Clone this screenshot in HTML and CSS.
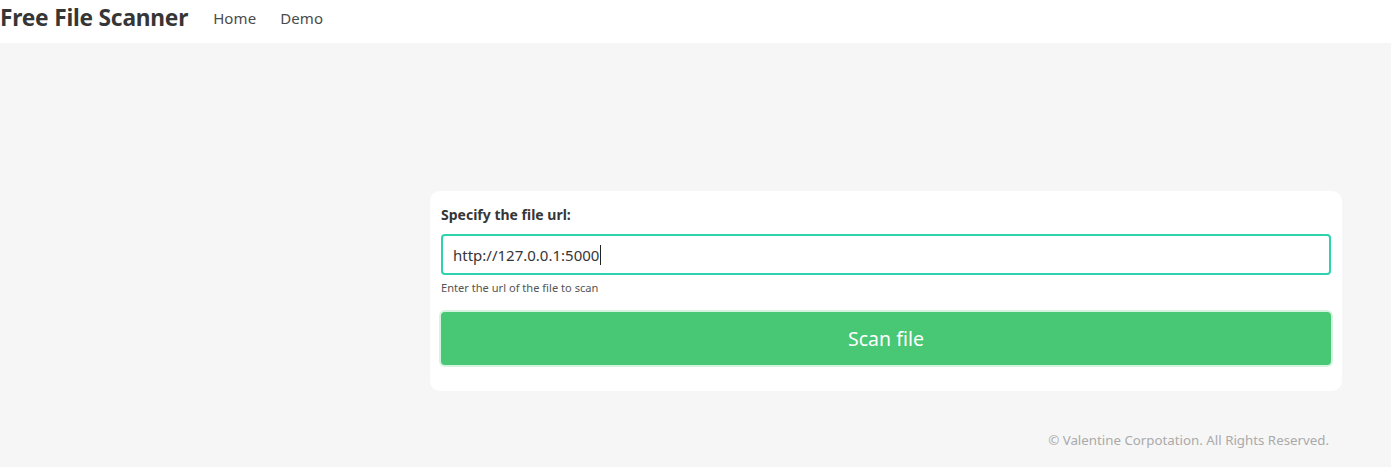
FILE: index.html
```html
<!DOCTYPE html>
<html>
<head>
<meta charset="utf-8">
<link rel="stylesheet" href="styles.css">
</head>
<body>
<nav class="navbar">
  <a class="brand" href="#">Free File Scanner</a>
  <a class="nav-link" href="#">Home</a>
  <a class="nav-link" href="#">Demo</a>
</nav>
<main class="main">
  <form class="card">
    <label class="label">Specify the file url:</label>
    <div class="input">http://127.0.0.1:5000<span class="caret"></span></div>
    <p class="help">Enter the url of the file to scan</p>
    <button class="button" type="button">Scan file</button>
  </form>
</main>
<footer class="footer">© Valentine Corpotation. All Rights Reserved.</footer>
</body>
</html>
```
FILE: styles.css
```css
* { box-sizing: border-box; }
html, body { margin: 0; padding: 0; }
body {
  background: #f6f6f6;
  font-family: "Noto Sans", "Open Sans", sans-serif;
  color: #4a4a4a;
  height: 467px;
  overflow: hidden;
}
.navbar {
  height: 43px;
  padding-bottom: 8px;
  background: #fff;
  display: flex;
  align-items: center;
}
.brand {
  font-size: 22.7px;
  font-weight: 700;
  color: #363636;
  text-decoration: none;
  margin-right: 25px;
  letter-spacing: -0.2px;
}
.nav-link {
  font-size: 15px;
  color: #4a4a4a;
  text-decoration: none;
  margin-right: 24px;
  letter-spacing: 0.1px;
}
.main {
  padding: 148px 49px 0 430px;
}
.card {
  background: #fff;
  border-radius: 10px;
  padding: 14px 11px 26px 11px;
  display: flex;
  flex-direction: column;
}
.label {
  font-size: 14px;
  font-weight: 700;
  color: #363636;
  line-height: 20px;
  margin-bottom: 9px;
}
.input {
  height: 41px;
  border: 2px solid #2ed3ad;
  border-radius: 4px;
  padding: 0 10px;
  font-size: 15px;
  color: #363636;
  display: flex;
  align-items: center;
}
.caret {
  display: inline-block;
  width: 1px;
  height: 20px;
  background: #222;
  margin-left: 1px;
}
.help {
  font-size: 11.1px;
  color: #555;
  margin: 5px 0 0 0;
  line-height: 16px;
}
.button {
  margin-top: 16px;
  height: 53px;
  background: #48c774;
  color: #fff;
  border: none;
  border-radius: 4px;
  box-shadow: 0 0 0 2px #d6f3e0;
  font-family: inherit;
  font-size: 19.5px;
  width: 100%;
}
.footer {
  text-align: right;
  padding: 40px 62px 0 0;
  font-size: 13.3px;
  color: #aaa;
}
```
